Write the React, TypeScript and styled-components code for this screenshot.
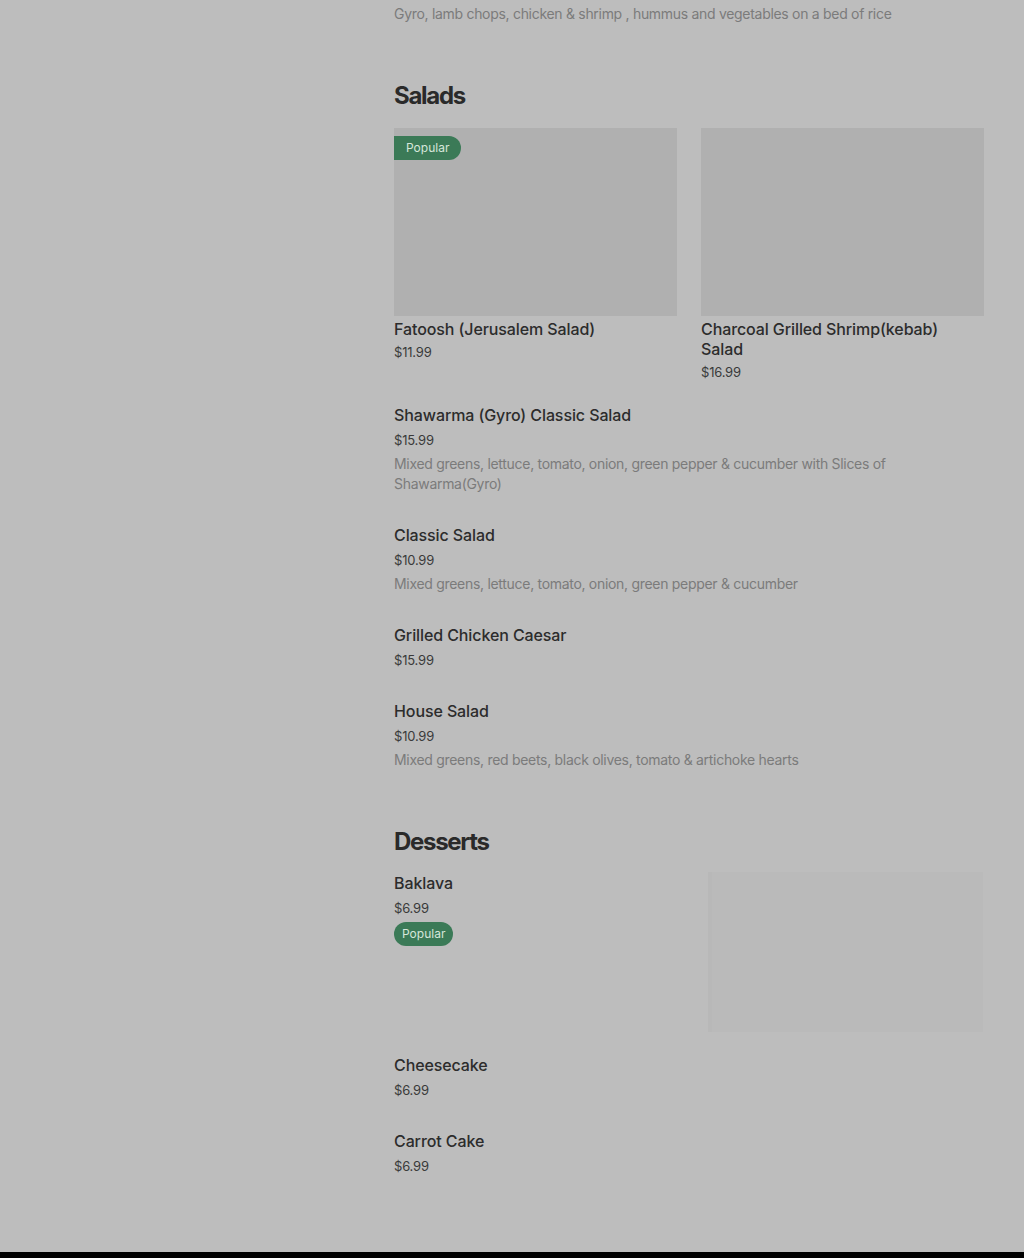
import React from 'react';
import styled, { createGlobalStyle } from 'styled-components';

type Item = {
  name: string;
  price: string;
  desc?: string;
  popular?: boolean;
};

const saladCards: Item[] = [
  { name: 'Fatoosh (Jerusalem Salad)', price: '$11.99', popular: true },
  { name: 'Charcoal Grilled Shrimp(kebab) Salad', price: '$16.99' },
];

const salads: Item[] = [
  {
    name: 'Shawarma (Gyro) Classic Salad',
    price: '$15.99',
    desc: 'Mixed greens, lettuce, tomato, onion, green pepper & cucumber with Slices of Shawarma(Gyro)',
  },
  { name: 'Classic Salad', price: '$10.99', desc: 'Mixed greens, lettuce, tomato, onion, green pepper & cucumber' },
  { name: 'Grilled Chicken Caesar', price: '$15.99' },
  { name: 'House Salad', price: '$10.99', desc: 'Mixed greens, red beets, black olives, tomato & artichoke hearts' },
];

const desserts: Item[] = [
  { name: 'Cheesecake', price: '$6.99' },
  { name: 'Carrot Cake', price: '$6.99' },
];

export default function App() {
  return (
    <>
      <GlobalStyle />
      <Page>
        <Sidebar />
        <Main>
          <Description>Gyro, lamb chops, chicken &amp; shrimp , hummus and vegetables on a bed of rice</Description>

          <Section>
            <SectionTitle>Salads</SectionTitle>
            <CardGrid>
              {saladCards.map((item) => (
                <Card key={item.name}>
                  <CardImage>{item.popular && <CornerBadge>Popular</CornerBadge>}</CardImage>
                  <CardTitle>{item.name}</CardTitle>
                  <CardPrice>{item.price}</CardPrice>
                </Card>
              ))}
            </CardGrid>
            <ItemList>
              {salads.map((item) => (
                <ItemRow key={item.name}>
                  <ItemTitle>{item.name}</ItemTitle>
                  <ItemPrice>{item.price}</ItemPrice>
                  {item.desc && <ItemDesc>{item.desc}</ItemDesc>}
                </ItemRow>
              ))}
            </ItemList>
          </Section>

          <Section>
            <SectionTitle>Desserts</SectionTitle>
            <FeatureRow>
              <div>
                <ItemTitle>Baklava</ItemTitle>
                <ItemPrice>$6.99</ItemPrice>
                <PillBadge>Popular</PillBadge>
              </div>
              <FeatureImage />
            </FeatureRow>
            <ItemList>
              {desserts.map((item) => (
                <ItemRow key={item.name}>
                  <ItemTitle>{item.name}</ItemTitle>
                  <ItemPrice>{item.price}</ItemPrice>
                </ItemRow>
              ))}
            </ItemList>
          </Section>
        </Main>
      </Page>
      <Footer />
    </>
  );
}

const GlobalStyle = createGlobalStyle`
  body {
    margin: 0;
    background: #bdbdbd;
    font-family: Inter, 'Liberation Sans', sans-serif;
    color: #2c2c2c;
  }
`;

const Page = styled.div`
  display: grid;
  grid-template-columns: 330px 1fr;
  column-gap: 24px;
  padding: 0 40px;
  height: 1252px;
  box-sizing: border-box;
`;

const Sidebar = styled.aside``;

const Main = styled.main`
  display: flex;
  flex-direction: column;
`;

const Description = styled.p`
  margin: 4px 0 0;
  font-size: 14px;
  line-height: 20px;
  letter-spacing: -0.3px;
  color: #7b7b7b;
`;

const Section = styled.section`
  margin-top: 56px;
`;

const SectionTitle = styled.h2`
  margin: 0 0 15px;
  font-size: 24px;
  line-height: 32px;
  font-weight: 700;
  letter-spacing: -1.3px;
  color: #2a2a2a;
`;

const CardGrid = styled.div`
  display: grid;
  grid-template-columns: 1fr 1fr;
  column-gap: 24px;
  margin-top: 16px;
`;

const Card = styled.div`
  display: flex;
  flex-direction: column;
`;

const CardImage = styled.div`
  position: relative;
  height: 188px;
  background: #b0b0b0;
  margin-bottom: 3px;
`;

const CornerBadge = styled.span`
  position: absolute;
  top: 8px;
  left: 0;
  height: 24px;
  line-height: 24px;
  padding: 0 12px;
  border-radius: 0 12px 12px 0;
  background: #3b7a57;
  color: #d6e6da;
  font-size: 12px;
`;

const CardTitle = styled.div`
  font-size: 16px;
  line-height: 20px;
  font-weight: 500;
  letter-spacing: -0.1px;
  color: #2c2c2c;
  padding-right: 24px;
`;

const CardPrice = styled.div`
  margin-top: 3px;
  font-size: 13px;
  line-height: 20px;
  letter-spacing: -0.2px;
  color: #3a3a3a;
`;

const ItemList = styled.div`
  display: flex;
  flex-direction: column;
  gap: 31px;
  margin-top: 23px;
`;

const ItemRow = styled.div`
  display: flex;
  flex-direction: column;
`;

const ItemTitle = styled.div`
  font-size: 16px;
  line-height: 20px;
  font-weight: 500;
  letter-spacing: -0.1px;
  color: #2c2c2c;
`;

const ItemPrice = styled.div`
  margin-top: 5px;
  font-size: 13px;
  line-height: 20px;
  letter-spacing: -0.2px;
  color: #3a3a3a;
`;

const ItemDesc = styled.div`
  margin-top: 4px;
  font-size: 14px;
  line-height: 20px;
  letter-spacing: -0.3px;
  color: #7b7b7b;
  padding-right: 80px;
`;

const PillBadge = styled.span`
  display: inline-block;
  margin-top: 4px;
  height: 24px;
  line-height: 24px;
  padding: 0 8px;
  border-radius: 12px;
  background: #3b7a57;
  color: #d6e6da;
  font-size: 12px;
`;

const FeatureRow = styled.div`
  display: grid;
  grid-template-columns: 1fr 276px;
  column-gap: 24px;
`;

const FeatureImage = styled.div`
  margin-top: -1px;
  height: 160px;
  background: #bababa;
  border-left: 4px solid #b8b8b8;
  margin-right: 1px;
`;

const Footer = styled.footer`
  height: 6px;
  background: #000;
`;
